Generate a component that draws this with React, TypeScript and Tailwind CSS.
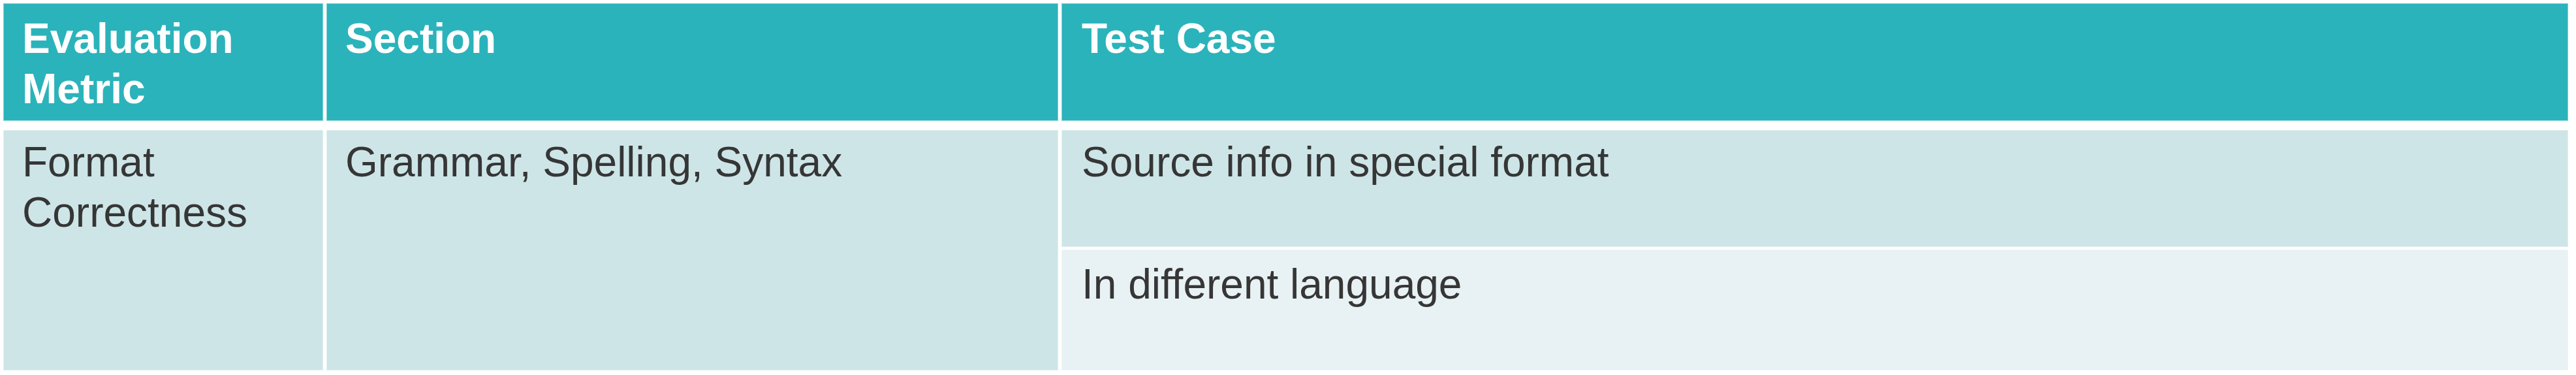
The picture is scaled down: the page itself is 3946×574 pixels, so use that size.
import React from "react";

export default function App() {
  const font = { fontFamily: '"Liberation Sans", Arial, sans-serif' };
  return (
    <div
      className="w-[3946px] h-[574px] bg-white pl-[5px] pt-[5px] text-[64px] leading-[1.2]"
      style={font}
    >
      <div className="flex w-[3929px] flex-col gap-[14px]">
        {/* Header */}
        <div className="grid h-[180px] grid-cols-[490px_1121px_2308px] gap-x-[5px] font-bold text-white">
          <div className="border border-white/40 bg-[#2bb3bb] pl-[28px] pt-[15px]">
            Evaluation
            <br />
            Metric
          </div>
          <div className="border border-white/40 bg-[#2bb3bb] pl-[28px] pt-[15px]">Section</div>
          <div className="border border-white/40 bg-[#2bb3bb] pl-[30px] pt-[15px]">Test Case</div>
        </div>
        {/* Body */}
        <div className="grid h-[368px] grid-cols-[490px_1121px_2308px] gap-x-[5px] text-[#363636]">
          <div className="border border-white/40 bg-[#cde5e7] pl-[28px] pt-[10px]">
            Format
            <br />
            Correctness
          </div>
          <div className="border border-white/40 bg-[#cde5e7] pl-[28px] pt-[10px]">
            Grammar, Spelling, Syntax
          </div>
          <div className="flex flex-col gap-[4px]">
            <div className="h-[179px] border border-white/40 bg-[#cde5e7] pl-[30px] pt-[10px]">
              Source info in special format
            </div>
            <div className="h-[185px] border border-white/40 bg-[#e8f1f3] pl-[30px] pt-[14px]">
              In different language
            </div>
          </div>
        </div>
      </div>
    </div>
  );
}
